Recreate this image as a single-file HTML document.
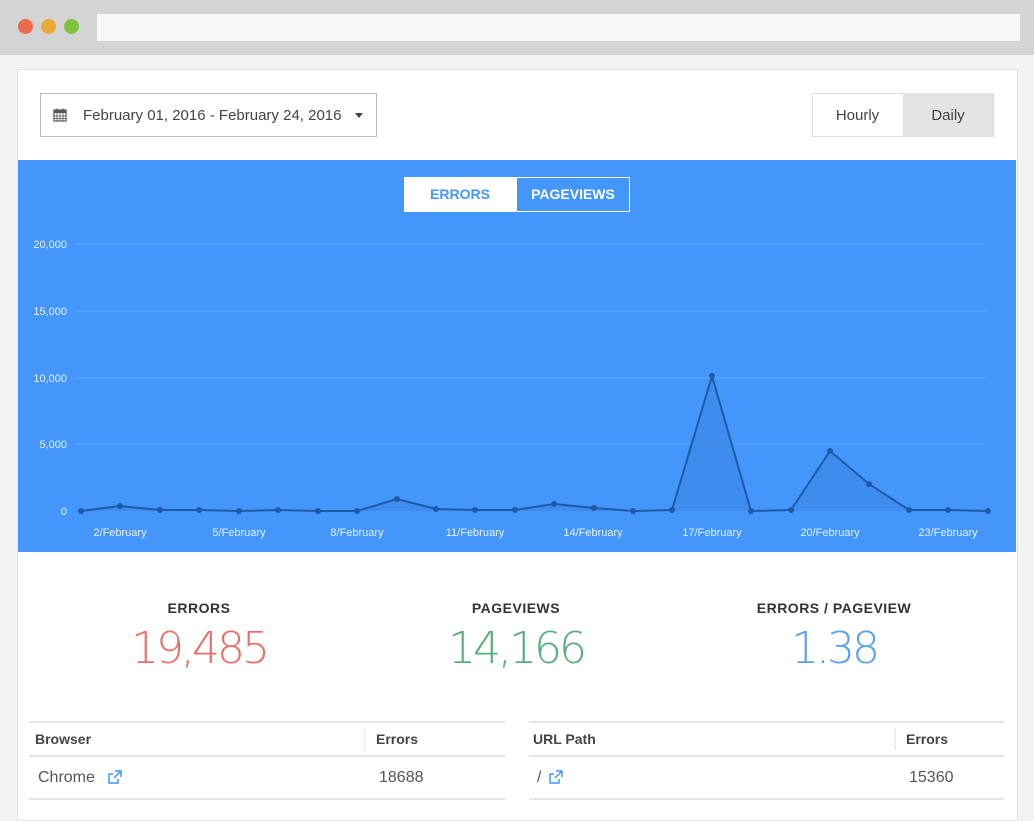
<!DOCTYPE html><html><head><style>
body{margin:0;width:1034px;height:811px;background:#f3f3f6;font-family:"Liberation Sans",sans-serif;overflow:hidden;position:relative}
.top{position:absolute;left:0;top:0;width:1034px;height:55px;background:#d4d4d4}
.dot{position:absolute;top:19px;width:15px;height:15px;border-radius:50%}
.url{position:absolute;left:97px;top:14px;width:923px;height:27px;background:#f7f7f7}
.card{position:absolute;left:17px;top:69px;width:999px;height:750px;background:#fff;border:1px solid #e2e2e6}
.abs{position:absolute}
.lbl{position:absolute;font-weight:bold;font-size:14px;color:#333;width:300px;text-align:center;letter-spacing:.5px}
.num{position:absolute;font-family:"DejaVu Sans","Liberation Sans",sans-serif;font-size:44px;font-weight:200;width:300px;text-align:center;letter-spacing:-3px}
</style></head><body>
<div class="top"><div class="dot" style="left:18px;background:#ec6b4d"></div><div class="dot" style="left:41px;background:#e9a937"></div><div class="dot" style="left:64px;background:#80c23c"></div><div class="url"></div></div>
<div class="card"></div>
<div class="abs" style="left:40px;top:93px;width:335px;height:42px;border:1px solid #bbb;background:#fff"></div>
<svg class="abs" style="left:53px;top:108px" width="14" height="14" viewBox="0 0 14 14"><rect x="1" y="2" width="12" height="11" fill="none" stroke="#555" stroke-width="1.2"/><rect x="1" y="2" width="12" height="3" fill="#555"/><path d="M1 8h12M1 10.5h12M4 5v8M7 5v8M10 5v8" stroke="#555" stroke-width=".8"/><path d="M4 0.5v3M10 0.5v3" stroke="#555" stroke-width="1.2"/></svg>
<div class="abs" style="left:83px;top:107px;font-size:15px;color:#444">February 01, 2016 - February 24, 2016</div>
<div class="abs" style="left:355px;top:113px;border:4px solid transparent;border-top:5px solid #444"></div>
<div class="abs" style="left:812px;top:93px;width:180px;height:42px;border:1px solid #ddd;background:#fff"></div>
<div class="abs" style="left:903px;top:93px;width:90px;height:44px;background:#e3e3e3"></div>
<div class="abs" style="left:812px;top:107px;width:91px;text-align:center;font-size:15px;color:#444">Hourly</div>
<div class="abs" style="left:903px;top:107px;width:90px;text-align:center;font-size:15px;color:#444">Daily</div>
<div class="abs" style="left:18px;top:160px;width:998px;height:392px;background:#4596fb"></div>
<div class="abs" style="left:404px;top:177px;width:112px;height:35px;background:#fff;color:#4596fb;font-weight:bold;font-size:14px;text-align:center;line-height:35px">ERRORS</div>
<div class="abs" style="left:516px;top:177px;width:112px;height:33px;border:1px solid #fff;color:#fff;font-weight:bold;font-size:14px;text-align:center;line-height:33px">PAGEVIEWS</div>
<svg class="abs" style="left:0;top:0" width="1034" height="560">
<g stroke="#5aa4fb" stroke-width="1"><path d="M75 244H988M75 311H988M75 378H988M75 444H988"/></g>
<g fill="#e6f0ff" font-size="11" text-anchor="end" font-family="Liberation Sans"><text x="67" y="248">20,000</text><text x="67" y="315">15,000</text><text x="67" y="382">10,000</text><text x="67" y="448">5,000</text><text x="67" y="515">0</text></g>
<g fill="#e6f0ff" font-size="11" text-anchor="middle" font-family="Liberation Sans"><text x="120" y="536">2/February</text><text x="239" y="536">5/February</text><text x="357" y="536">8/February</text><text x="475" y="536">11/February</text><text x="593" y="536">14/February</text><text x="712" y="536">17/February</text><text x="830" y="536">20/February</text><text x="948" y="536">23/February</text></g>
<path d="M81 511L120 506L160 510L199 510L239 511L278 510L318 511L357 511L397 499L436 509L475 510L515 510L554 504L594 508L633 511L672 510L712 376L751 511L791 510L830 451L869 484L909 510L948 510L988 511Z" fill="#3a86e6" fill-opacity=".6"/>
<polyline points="81,511 120,506 160,510 199,510 239,511 278,510 318,511 357,511 397,499 436,509 475,510 515,510 554,504 594,508 633,511 672,510 712,376 751,511 791,510 830,451 869,484 909,510 948,510 988,511" fill="none" stroke="#1f5aa8" stroke-width="2"/>
<g fill="#1f5aa8"><circle cx="81" cy="511" r="3"/><circle cx="120" cy="506" r="3"/><circle cx="160" cy="510" r="3"/><circle cx="199" cy="510" r="3"/><circle cx="239" cy="511" r="3"/><circle cx="278" cy="510" r="3"/><circle cx="318" cy="511" r="3"/><circle cx="357" cy="511" r="3"/><circle cx="397" cy="499" r="3"/><circle cx="436" cy="509" r="3"/><circle cx="475" cy="510" r="3"/><circle cx="515" cy="510" r="3"/><circle cx="554" cy="504" r="3"/><circle cx="594" cy="508" r="3"/><circle cx="633" cy="511" r="3"/><circle cx="672" cy="510" r="3"/><circle cx="712" cy="376" r="3"/><circle cx="751" cy="511" r="3"/><circle cx="791" cy="510" r="3"/><circle cx="830" cy="451" r="3"/><circle cx="869" cy="484" r="3"/><circle cx="909" cy="510" r="3"/><circle cx="948" cy="510" r="3"/><circle cx="988" cy="511" r="3"/></g>
</svg>
<div class="lbl" style="left:49px;top:600px">ERRORS</div>
<div class="lbl" style="left:366px;top:600px">PAGEVIEWS</div>
<div class="lbl" style="left:684px;top:600px">ERRORS / PAGEVIEW</div>
<div class="num" style="left:49px;top:623px;color:#e8706a">19,485</div>
<div class="num" style="left:366px;top:623px;color:#5aae7c">14,166</div>
<div class="num" style="left:684px;top:623px;color:#5aa0ef">1.38</div>
<div class="abs" style="left:29px;top:721px;width:476px;height:2px;background:#e5e5e5"></div>
<div class="abs" style="left:529px;top:721px;width:475px;height:2px;background:#e5e5e5"></div>
<div class="abs" style="left:29px;top:755px;width:476px;height:2px;background:#e5e5e5"></div>
<div class="abs" style="left:529px;top:755px;width:475px;height:2px;background:#e5e5e5"></div>
<div class="abs" style="left:29px;top:798px;width:476px;height:2px;background:#e5e5e5"></div>
<div class="abs" style="left:529px;top:798px;width:475px;height:2px;background:#e5e5e5"></div>
<div class="abs" style="left:364px;top:728px;width:1px;height:22px;background:#e5e5e5"></div>
<div class="abs" style="left:895px;top:728px;width:1px;height:22px;background:#e5e5e5"></div>
<div class="abs" style="left:35px;top:731px;font-size:14px;font-weight:bold;color:#444">Browser</div>
<div class="abs" style="left:376px;top:731px;font-size:14px;font-weight:bold;color:#444">Errors</div>
<div class="abs" style="left:533px;top:731px;font-size:14px;font-weight:bold;color:#444">URL Path</div>
<div class="abs" style="left:906px;top:731px;font-size:14px;font-weight:bold;color:#444">Errors</div>
<div class="abs" style="left:38px;top:769px;font-size:16px;color:#555">Chrome</div>
<div class="abs" style="left:379px;top:769px;font-size:16px;color:#555">18688</div>
<div class="abs" style="left:537px;top:769px;font-size:16px;color:#555">/</div>
<div class="abs" style="left:909px;top:769px;font-size:16px;color:#555">15360</div>
<svg class="abs" style="left:107px;top:770px" width="15" height="15" viewBox="0 0 15 15"><path d="M11 9v4H2V4h4" fill="none" stroke="#4596fb" stroke-width="1.5"/><path d="M8 1h6v6M14 1L7 8" fill="none" stroke="#4596fb" stroke-width="1.5"/></svg>
<svg class="abs" style="left:548px;top:770px" width="15" height="15" viewBox="0 0 15 15"><path d="M11 9v4H2V4h4" fill="none" stroke="#4596fb" stroke-width="1.5"/><path d="M8 1h6v6M14 1L7 8" fill="none" stroke="#4596fb" stroke-width="1.5"/></svg>
</body></html>
